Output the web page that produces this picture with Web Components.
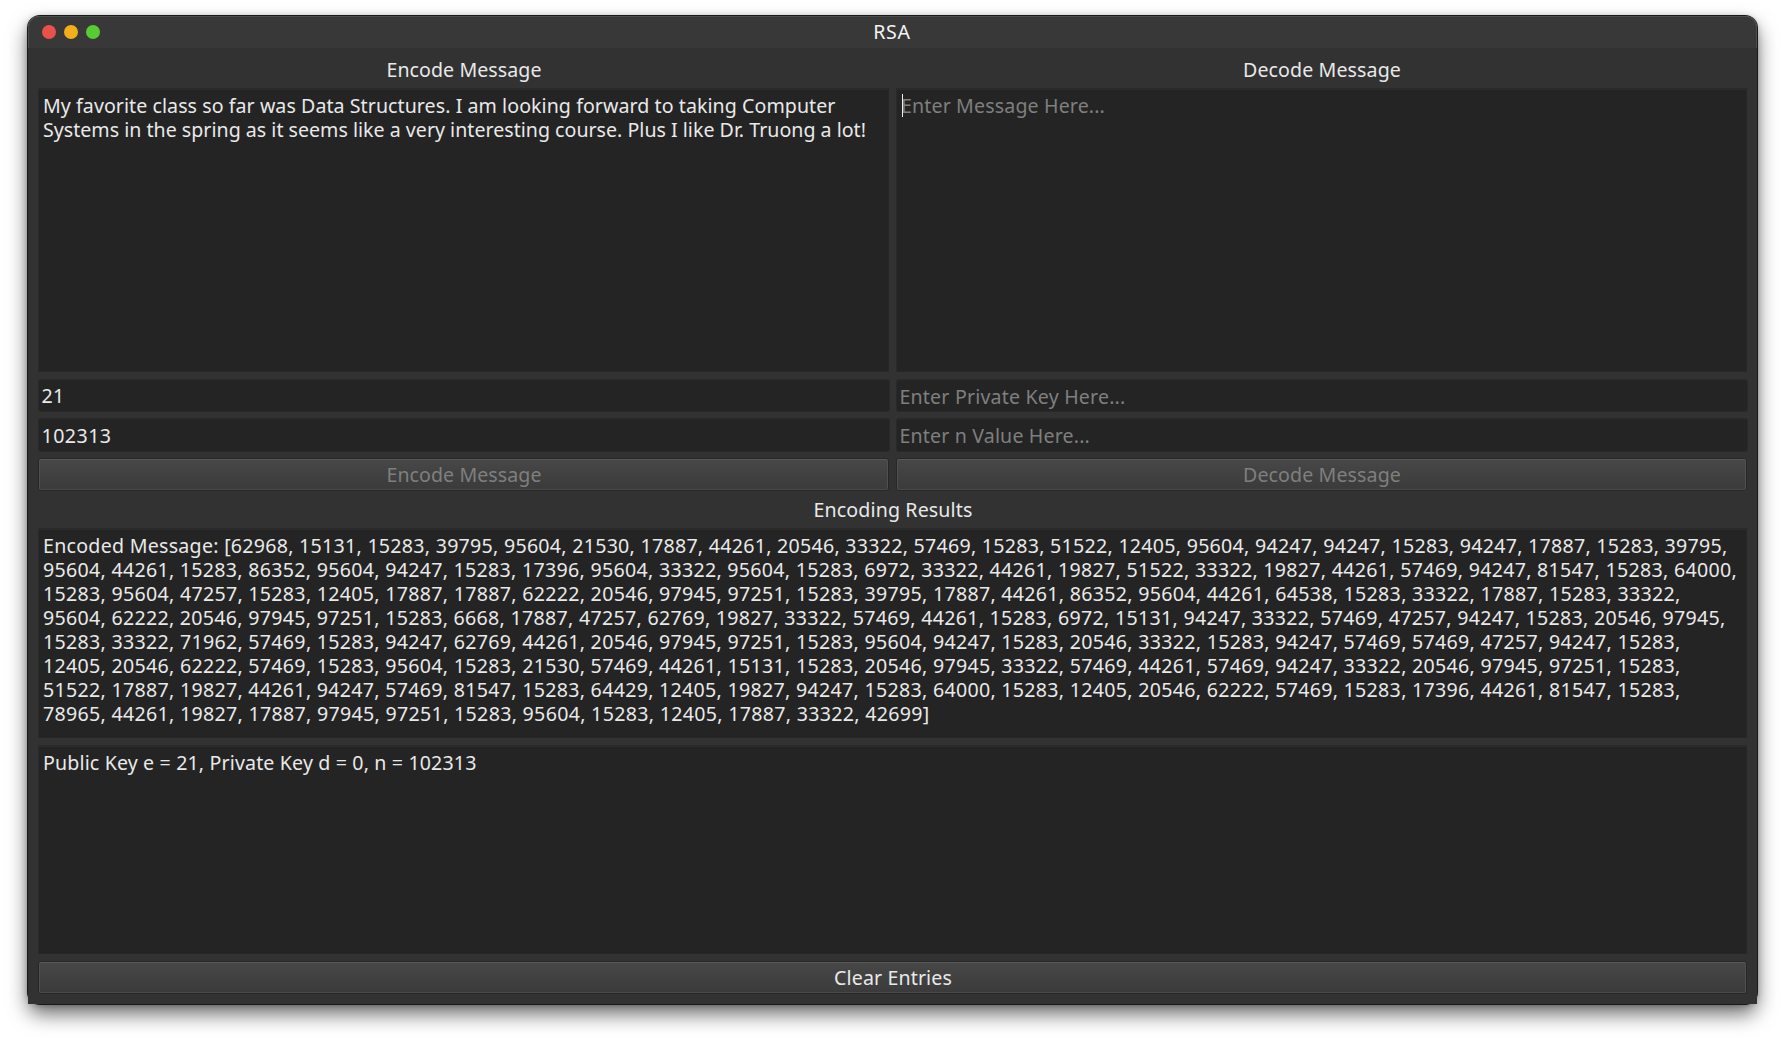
<!DOCTYPE html>
<html lang="en">
<head>
<meta charset="utf-8">
<title>RSA</title>
<style>
  html, body { margin: 0; background: #fff; }
  body { width: 1785px; height: 1044px; overflow: hidden; font: 20px/24px "Noto Sans", "Open Sans", sans-serif; color: #e9e9e9; box-sizing: border-box; padding: 16px 28px 40px; }
</style>
</head>
<body>
<rsa-window caption="RSA">
  <form-row cols="2" style="--h:34px">
    <form-label w="155">Encode Message</form-label>
    <form-label w="158">Decode Message</form-label>
  </form-row>
  <form-row cols="2" style="--h:285px;--gap:6px">
    <text-area>
      <text-line w="792.5">My favorite class so far was Data Structures. I am looking forward to taking Computer</text-line>
      <text-line w="823">Systems in the spring as it seems like a very interesting course. Plus I like Dr. Truong a lot!</text-line>
    </text-area>
    <text-area focused><text-line w="204" dim>Enter Message Here...</text-line></text-area>
  </form-row>
  <form-row cols="2" style="--h:33px;--gap:6px">
    <line-edit><text-line w="23">21</text-line></line-edit>
    <line-edit style="--y:1px;--x:2.5px"><text-line w="226" dim>Enter Private Key Here...</text-line></line-edit>
  </form-row>
  <form-row cols="2" style="--h:34px;--gap:6px">
    <line-edit style="--y:1px"><text-line w="70">102313</text-line></line-edit>
    <line-edit style="--y:1px;--x:2.5px"><text-line w="190.5" dim>Enter n Value Here...</text-line></line-edit>
  </form-row>
  <form-row cols="2" style="--h:33px">
    <push-button><text-line w="155" dim>Encode Message</text-line></push-button>
    <push-button><text-line w="158" dim>Decode Message</text-line></push-button>
  </form-row>
  <form-row style="--h:37px;--y:7px"><form-label w="159">Encoding Results</form-label></form-row>
  <form-row style="--h:211px;--gap:6px">
    <text-area>
      <text-line w="1684.5">Encoded Message: [62968, 15131, 15283, 39795, 95604, 21530, 17887, 44261, 20546, 33322, 57469, 15283, 51522, 12405, 95604, 94247, 94247, 15283, 94247, 17887, 15283, 39795,</text-line>
      <text-line w="1694">95604, 44261, 15283, 86352, 95604, 94247, 15283, 17396, 95604, 33322, 95604, 15283, 6972, 33322, 44261, 19827, 51522, 33322, 19827, 44261, 57469, 94247, 81547, 15283, 64000,</text-line>
      <text-line w="1637.5">15283, 95604, 47257, 15283, 12405, 17887, 17887, 62222, 20546, 97945, 97251, 15283, 39795, 17887, 44261, 86352, 95604, 44261, 64538, 15283, 33322, 17887, 15283, 33322,</text-line>
      <text-line w="1682.5">95604, 62222, 20546, 97945, 97251, 15283, 6668, 17887, 47257, 62769, 19827, 33322, 57469, 44261, 15283, 6972, 15131, 94247, 33322, 57469, 47257, 94247, 15283, 20546, 97945,</text-line>
      <text-line w="1637.5">15283, 33322, 71962, 57469, 15283, 94247, 62769, 44261, 20546, 97945, 97251, 15283, 95604, 94247, 15283, 20546, 33322, 15283, 94247, 57469, 57469, 47257, 94247, 15283,</text-line>
      <text-line w="1637.5">12405, 20546, 62222, 57469, 15283, 95604, 15283, 21530, 57469, 44261, 15131, 15283, 20546, 97945, 33322, 57469, 44261, 57469, 94247, 33322, 20546, 97945, 97251, 15283,</text-line>
      <text-line w="1637.5">51522, 17887, 19827, 44261, 94247, 57469, 81547, 15283, 64429, 12405, 19827, 94247, 15283, 64000, 15283, 12405, 20546, 62222, 57469, 15283, 17396, 44261, 81547, 15283,</text-line>
      <text-line w="886.5">78965, 44261, 19827, 17887, 97945, 97251, 15283, 95604, 15283, 12405, 17887, 33322, 42699]</text-line>
    </text-area>
  </form-row>
  <form-row style="--h:210px;--gap:6px">
    <text-area><text-line w="433.5">Public Key e = 21, Private Key d = 0, n = 102313</text-line></text-area>
  </form-row>
  <form-row style="--h:33px"><push-button><text-line w="118">Clear Entries</text-line></push-button></form-row>
</rsa-window>
<script>
const define = (name, html, setup) => customElements.define(name, class extends HTMLElement {
  connectedCallback() {
    if (this.shadowRoot) return;
    this.attachShadow({ mode: 'open' }).innerHTML = html;
    if (setup) setup(this, this.shadowRoot);
  }
});

// Tracks a single line of text out to a given advance width.
define('text-line', `<style>
  :host { display: block; white-space: nowrap; font-size: 19.6px; line-height: 24px; height: 24px; }
  :host([dim]) { color: #7f7f7f; }
  span { display: inline-block; }
</style><span><slot></slot></span>`, (el, root) => {
  const span = root.querySelector('span');
  const spread = (Number(el.getAttribute('w')) - span.getBoundingClientRect().width) / el.textContent.length;
  span.style.letterSpacing = spread + 'px';
});

define('form-label', `<style>
  :host { display: flex; justify-content: center; align-items: flex-start; padding-top: var(--y, 4px); }
</style><text-line></text-line>`, (el, root) => {
  const line = document.createElement('text-line');
  line.setAttribute('w', el.getAttribute('w'));
  line.textContent = el.textContent;
  root.querySelector('text-line').replaceWith(line);
});

define('form-row', `<style>
  :host { display: grid; grid-template-columns: 1fr; column-gap: 6px; height: var(--h); margin-bottom: var(--gap, 0); }
  :host([cols="2"]) { grid-template-columns: 1fr 1fr; }
</style><slot></slot>`);

define('text-area', `<style>
  :host { display: block; box-sizing: border-box; margin: 0 1px 1px 0; border: 1px solid #2a2a2a; border-right-color: #272727; border-bottom-color: #272727; background: #242424; box-shadow: inset 0 1px #2b2b2b; padding: 5px 0 0 var(--x, 4px); position: relative; }
  i { display: none; position: absolute; left: 5px; top: 5px; width: 1px; height: 23px; background: #efefef; }
  :host([focused]) i { display: block; }
</style><slot></slot><i></i>`);

define('line-edit', `<style>
  :host { display: block; box-sizing: border-box; border: 1px solid #292929; border-radius: 3px; background: #242424; box-shadow: inset 0 1px #282828; padding: calc(4px + var(--y, 0px)) 0 0 var(--x, 2.5px); }
</style><slot></slot>`);

define('push-button', `<style>
  :host { display: flex; box-sizing: border-box; margin-right: 1px; border: 1px solid #272727; border-radius: 3px; background: #3f3f3f; }
  div { flex: 1; box-sizing: border-box; display: flex; justify-content: center; padding: 3px 0 0 1px; border: 1px solid #505050; border-top-color: #585858; border-bottom-color: #494949; border-radius: 2px; background: linear-gradient(#474747, #3b3b3b); }
</style><div><slot></slot></div>`);

define('title-bar', `<style>
  :host { display: grid; grid-template-columns: 1fr auto 1fr; box-sizing: border-box; height: 32px; background: #383838; border: 1px solid #4a4f4c; border-bottom: 0; border-radius: 11px 11px 0 0; padding: 3px 0 0 13px; }
  div { display: flex; gap: 8px; padding-top: 5px; }
  b { width: 14px; height: 14px; border-radius: 50%; background: #ea5148; }
  b:nth-child(2) { background: #f2ae1b; } b:nth-child(3) { background: #58cb36; }
  text-line { margin-right: 14px; color: #f4f4f4; }
</style><div><b></b><b></b><b></b></div><text-line w="37.5">RSA</text-line>`);

define('rsa-window', `<style>
  :host { display: block; width: 1729px; height: 988px; border-radius: 12px; box-shadow: 0 0 0 1px #191919, 0 1px 6px rgba(0,0,0,.28), 0 10px 20px rgba(0,0,0,.58); }
  section { box-sizing: border-box; height: 988px; background: #323232; border-radius: 12px 12px 0 0; }
  main { padding: 6px 9px 0 10px; }
</style><section><title-bar></title-bar><main><slot></slot></main></section>`);
</script>
</body>
</html>
